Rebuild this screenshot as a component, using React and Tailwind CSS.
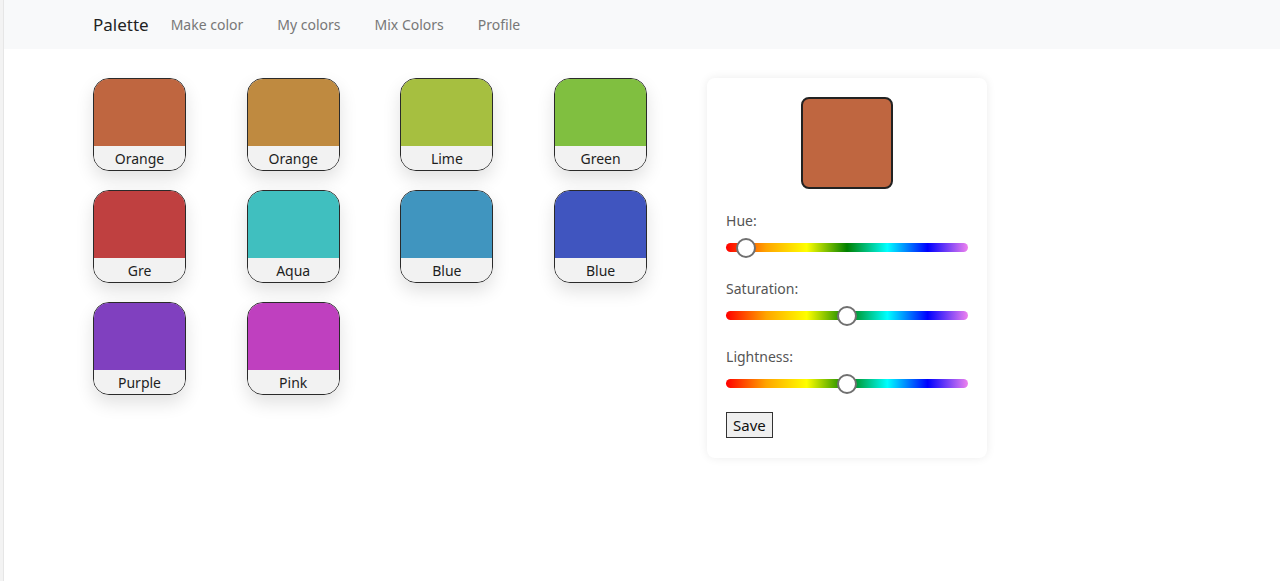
import React from "react";

const colors = [
  { name: "Orange", hex: "#bf6640" },
  { name: "Orange", hex: "#bf8a40" },
  { name: "Lime", hex: "#a6bf40" },
  { name: "Green", hex: "#80bf40" },
  { name: "Gre", hex: "#bf4040" },
  { name: "Aqua", hex: "#40bfbf" },
  { name: "Blue", hex: "#4095bf" },
  { name: "Blue", hex: "#4055bf" },
  { name: "Purple", hex: "#8040bf" },
  { name: "Pink", hex: "#bf40bf" },
];

function ColorTile({ name, hex }) {
  return (
    <div className="w-[93px] h-[93px] rounded-[16px] border-[1.5px] border-[#2a2a2a] overflow-hidden flex flex-col shadow-[0_8px_18px_rgba(0,0,0,0.12)]">
      <div className="flex-1" style={{ backgroundColor: hex }} />
      <div className="h-[24px] bg-[#f2f2f2] text-[14px] leading-[25px] text-center text-[#1e1e1e]">{name}</div>
    </div>
  );
}

function Slider({ label, pos }) {
  return (
    <div>
      <div className="text-[14px] leading-[20px] text-[#555]">{label}</div>
      <div className="relative mt-[12px] h-[9px] rounded-full bg-[linear-gradient(to_right,red,orange,yellow,green,cyan,blue,violet)]">
        <div
          className="absolute top-1/2 w-[20px] h-[20px] -mt-[10px] -ml-[10px] rounded-full bg-white border-2 border-[#707070]"
          style={{ left: pos }}
        />
      </div>
    </div>
  );
}

export default function App() {
  return (
    <div className="min-h-[581px] flex bg-white font-['Noto_Sans',sans-serif]">
      <div className="w-[4px] bg-[#f3f3f3] border-r border-[#e6e6e6]" />
      <div className="flex-1">
        {/* NAVBAR */}
        <nav className="h-[49px] bg-[#f8f9fa] flex items-center pl-[89px]">
          <span className="text-[17px] text-[#222] mr-[5px]">Palette</span>
          <a className="px-[17px] text-[14px] text-[#777]">Make color</a>
          <a className="px-[17px] text-[14px] text-[#777]">My colors</a>
          <a className="px-[17px] text-[14px] text-[#777]">Mix Colors</a>
          <a className="px-[17px] text-[14px] text-[#777]">Profile</a>
        </nav>

        <div className="flex items-start pl-[89px] pt-[29px] gap-[60px]">
          {/* GRID */}
          <div className="grid grid-cols-[repeat(4,93px)] gap-x-[60.7px] gap-y-[19px]">
            {colors.map((c, i) => (
              <ColorTile key={i} {...c} />
            ))}
          </div>

          {/* EDITOR */}
          <div className="w-[280px] rounded-[8px] bg-white shadow-[0_0_10px_rgba(0,0,0,0.08)] px-[19px] pt-[19px] pb-[20px]">
            <div className="mx-auto w-[92px] h-[92px] rounded-[8px] border-2 border-[#222] bg-[#bf6640]" />
            <div className="mt-[22px] flex flex-col gap-[27px]">
              <Slider label="Hue:" pos="20px" />
              <Slider label="Saturation:" pos="50%" />
              <Slider label="Lightness:" pos="50%" />
            </div>
            <button className="mt-[24px] h-[26px] px-[6px] bg-[#efefef] border border-[#333] text-[15px] leading-[24px] text-[#111]">
              Save
            </button>
          </div>
        </div>
      </div>
    </div>
  );
}
